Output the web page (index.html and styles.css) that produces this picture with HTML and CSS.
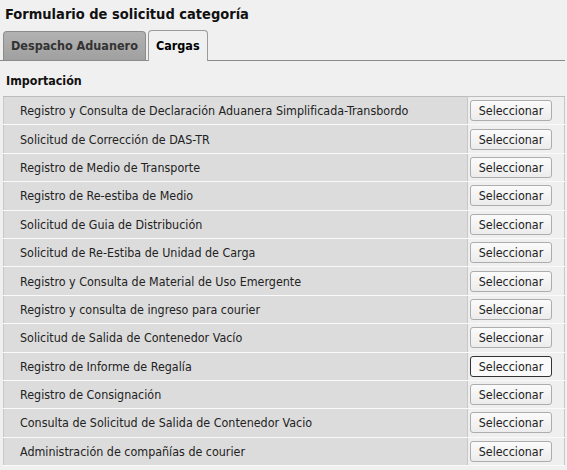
FILE: index.html
```html
<!DOCTYPE html>
<html lang="es">
<head>
  <meta charset="UTF-8">
  <title>Formulario de solicitud categoría</title>
  <link rel="stylesheet" href="styles.css">
</head>
<body>

<div class="page">
  <h1 class="title">Formulario de solicitud categoría</h1>

  <div class="tabs">
    <div class="tab">Despacho Aduanero</div>
    <div class="tab active">Cargas</div>
  </div>

  <h2 class="section">Importación</h2>

  <table class="forms">
    <tr><td class="name">Registro y Consulta de Declaración Aduanera Simplificada-Transbordo</td><td class="action"><button>Seleccionar</button></td></tr>
    <tr><td class="name">Solicitud de Corrección de DAS-TR</td><td class="action"><button>Seleccionar</button></td></tr>
    <tr><td class="name">Registro de Medio de Transporte</td><td class="action"><button>Seleccionar</button></td></tr>
    <tr><td class="name">Registro de Re-estiba de Medio</td><td class="action"><button>Seleccionar</button></td></tr>
    <tr><td class="name">Solicitud de Guia de Distribución</td><td class="action"><button>Seleccionar</button></td></tr>
    <tr><td class="name">Solicitud de Re-Estiba de Unidad de Carga</td><td class="action"><button>Seleccionar</button></td></tr>
    <tr><td class="name">Registro y Consulta de Material de Uso Emergente</td><td class="action"><button>Seleccionar</button></td></tr>
    <tr><td class="name">Registro y consulta de ingreso para courier</td><td class="action"><button>Seleccionar</button></td></tr>
    <tr><td class="name">Solicitud de Salida de Contenedor Vacío</td><td class="action"><button>Seleccionar</button></td></tr>
    <tr><td class="name">Registro de Informe de Regalía</td><td class="action"><button class="focused">Seleccionar</button></td></tr>
    <tr><td class="name">Registro de Consignación</td><td class="action"><button>Seleccionar</button></td></tr>
    <tr><td class="name">Consulta de Solicitud de Salida de Contenedor Vacio</td><td class="action"><button>Seleccionar</button></td></tr>
    <tr><td class="name">Administración de compañías de courier</td><td class="action"><button>Seleccionar</button></td></tr>
  </table>
</div>

</body>
</html>
```

FILE: styles.css
```css
/* Reset */
* {
  margin: 0;
  padding: 0;
  box-sizing: border-box;
}

body {
  font-family: "DejaVu Sans Condensed", "DejaVu Sans", sans-serif;
  font-size: 12.4px;
  color: #222;
  background-color: #f0f0f0;
}

.page {
  width: 567px;
  padding: 4px 2px 0 3px;
}

/* Heading */
.title {
  font-size: 14.5px;
  font-weight: bold;
  color: #111;
  padding-left: 2px;
  height: 26px;
  line-height: 21px;
}

/* Tabs */
.tabs {
  display: flex;
  align-items: flex-end;
  gap: 2px;
  height: 31px;
  margin-left: -3px;
  padding-left: 3px;
  border-bottom: 1px solid #8a8a8a;
}

.tab {
  height: 29px;
  padding: 0 7px;
  line-height: 28px;
  font-size: 12.5px;
  font-weight: bold;
  color: #333;
  background: linear-gradient(#b2b2b2, #a0a0a0);
  border: 1px solid #8c8c8c;
  border-bottom: none;
  border-radius: 4px 4px 0 0;
}

.tab.active {
  height: 31px;
  margin-bottom: -1px;
  line-height: 30px;
  color: #000;
  background: #f0f0f0;
  border-color: #9a9a9a;
}

/* Section */
.section {
  font-size: 12.4px;
  font-weight: bold;
  color: #111;
  padding: 12px 0 0 3px;
  height: 35px;
}

/* Forms table */
.forms {
  width: 562px;
  border-collapse: collapse;
  border: 1px solid #c8c8c8;
}

.forms td {
  height: 28.4px;
  border-top: 1px solid #bcbcbc;
  border-bottom: 1px solid #fafafa;
  vertical-align: middle;
}

.forms .name {
  padding-left: 16px;
  background-color: #dcdcdc;
  border-right: 1px solid #c8c8c8;
}

.forms .action {
  width: 97px;
  padding-left: 2px;
  background-color: #efefef;
}

button {
  display: block;
  width: 82px;
  height: 21px;
  font-family: "DejaVu Sans Condensed", "DejaVu Sans", sans-serif;
  font-size: 12.4px;
  color: #222;
  background: linear-gradient(#fbfbfb, #ececec);
  border: 1px solid #adadad;
  border-radius: 3px;
}

button.focused {
  border-color: #333;
  background: #fafafa;
}
```
